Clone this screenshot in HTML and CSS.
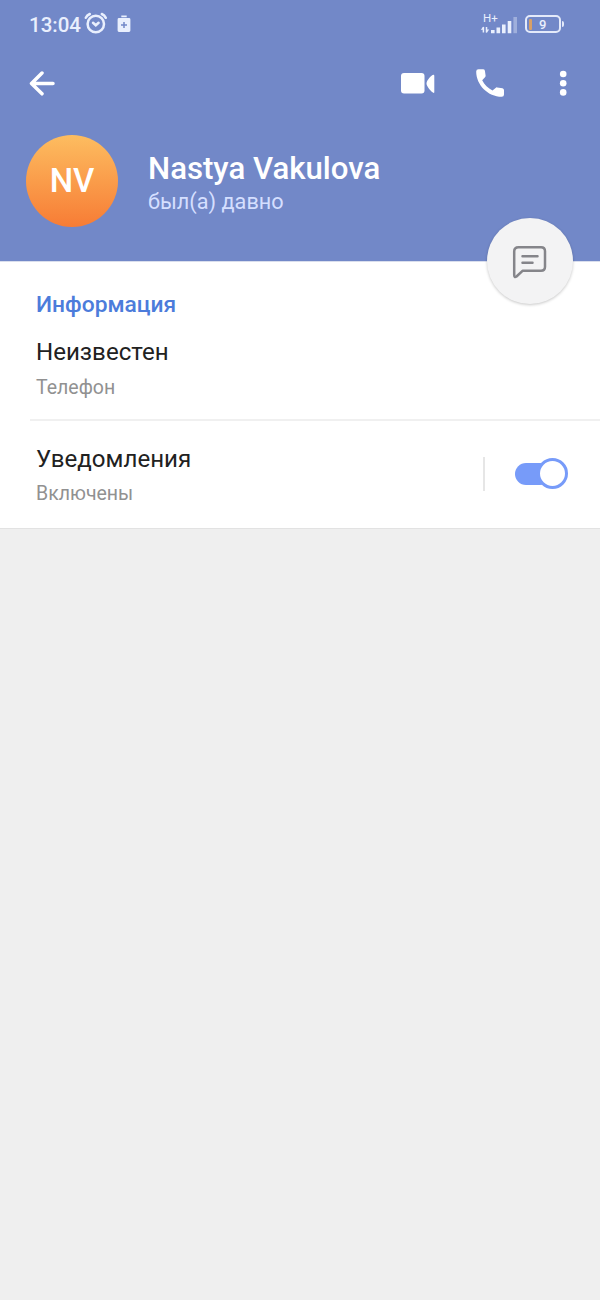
FILE: index.html
```html
<!DOCTYPE html>
<html lang="ru">
<head>
<meta charset="utf-8">
<title>Nastya Vakulova</title>
<link rel="stylesheet" href="styles.css">
</head>
<body>
<header class="header">
  <div class="status-bar">
    <span class="clock">13:04</span>
    <svg class="alarm" width="24" height="24" viewBox="0 0 24 24" fill="none" stroke="currentColor" stroke-width="2.500" stroke-linecap="round"><circle cx="11.800" cy="13" r="8.200"/><path d="M9 11.800l2.800 2.500 2.800-2.500M1.800 6.800Q3 4.300 5.800 3M21.800 6.800Q20.500 4.300 17.800 3"/></svg>
    <svg class="saver" width="14" height="18" viewBox="0 0 14 18"><path fill="currentColor" d="M4.300 .5h5.400v1.700H4.300zM2 3h10q1.400 0 1.400 1.400v11.200q0 1.400-1.400 1.400H2q-1.400 0-1.400-1.400V4.400Q.600 3 2 3z"/><path d="M7 7v6M4 10h6" stroke="#7288c8" stroke-width="1.500"/></svg>
    <div class="signal">
      <span class="network">H+</span>
      <svg class="bars" width="38" height="18" viewBox="0 0 38 18"><path fill="none" stroke="currentColor" stroke-width="1.500" d="M3.400 15.500V10M6.500 10v5.500"/><path fill="currentColor" d="M.800 12.800L3.400 9.500v3.300zM6.500 12.500H9.200L6.500 16z"/><path fill="currentColor" d="M11 13h3.600v3.200H11zM16.500 10.500h3.600v5.700h-3.600zM22 7.500h3.600v8.700H22zM27.700 4h3.600V16.200h-3.600z"/><path fill="currentColor" opacity=".38" d="M33.400 0H37v16.200h-3.600z"/></svg>
    </div>
    <div class="battery"><span class="charge"></span><span class="level">9</span></div>
    <span class="battery-tip"></span>
  </div>

  <nav class="toolbar">
    <svg class="back" width="28" height="26" viewBox="0 0 28 26" fill="none" stroke="currentColor" stroke-width="3.500" stroke-linecap="round" stroke-linejoin="round"><path d="M14 3L3.500 13.400 14 23.800M4 13.400H25"/></svg>
    <svg class="video" width="34" height="22" viewBox="0 0 34 22" fill="currentColor"><rect x="0" y="1" width="23.500" height="20.500" rx="3"/><path d="M25.500 11.500C25.500 8.500 30.500 3 32.400 2.800Q33.300 2.700 33.300 4V20Q33.300 21.200 32.400 20.800C30.500 20 25.500 14.500 25.500 11.500z"/></svg>
    <svg class="phone" width="30" height="30" viewBox="0 0 30 30" fill="currentColor"><path d="M3.500 1.300H8Q9.600 1.300 9.900 2.700L10.600 7.600Q10.700 8.500 10 9.300L7.200 12.300C9.500 16.900 13 20.300 17.500 22.600L20.600 19.900Q21.300 19.200 22.200 19.400L27.500 20.300Q29 20.600 29 22.200V26.500Q29 28.800 26.700 28.800C13 28.800 1.200 17 1.200 3.500Q1.200 1.300 3.500 1.300z"/></svg>
    <svg class="more" width="8" height="26" viewBox="0 0 8 26" fill="currentColor"><circle cx="4.200" cy="4" r="3.300"/><circle cx="4.200" cy="13.200" r="3.300"/><circle cx="4.200" cy="22.400" r="3.300"/></svg>
  </nav>

  <div class="profile">
    <div class="avatar">NV</div>
    <div class="identity">
      <h1 class="name">Nastya Vakulova</h1>
      <p class="presence">был(а) давно</p>
    </div>
  </div>
  <button class="message" aria-label="Сообщение">
    <svg width="36" height="36" viewBox="0 0 36 36" fill="none" stroke="currentColor" stroke-width="2.500" stroke-linecap="round" stroke-linejoin="round"><path d="M6.500 4.200H29Q33 4.200 33 8.200V23.800Q33 27.800 29 27.800H10.500L4.500 33.500Q2.200 35 2.200 32V8.500Q2.200 4.200 6.500 4.200zM10.500 13.300H25.500M10.500 19.800H20.500"/></svg>
  </button>
</header>

<main class="content">
  <section class="info">
    <h2 class="section-title">Информация</h2>
    <p class="value">Неизвестен</p>
    <p class="caption">Телефон</p>
  </section>
  <section class="notifications">
    <div class="setting">
      <p class="value">Уведомления</p>
      <p class="caption">Включены</p>
    </div>
    <span class="separator"></span>
    <div class="switch"><span class="track"></span><span class="knob"></span></div>
  </section>
</main>
</body>
</html>
```
FILE: styles.css
```css
* { box-sizing: border-box; }
body {
  margin: 0;
  min-height: 1300px;
  background: #efefef;
  font-family: Roboto, "Liberation Sans", sans-serif;
}
h1, h2, p { margin: 0; white-space: nowrap; }
svg { display: block; flex: none; }

.header {
  position: relative;
  height: 261px;
  background: #7288c8;
  color: #fff;
}
.status-bar {
  display: flex;
  align-items: center;
  height: 48px;
  padding: 0 36px 0 29px;
  color: #e9effd;
}
.clock { width: 55px; font-size: 20.500px; font-weight: 500; line-height: 28px; padding-top: 1px; }
.alarm { margin-top: -2px; }
.saver { margin-left: 9px; }
.signal { width: 38px; margin: 0 7px 0 auto; height: 22px; }
.network { display: block; height: 4px; padding-left: 3px; font-size: 11.500px; line-height: 11px; }
.battery {
  display: flex;
  align-items: center;
  width: 36px;
  height: 18px;
  padding-left: 2px;
  border: 2px solid #e4eafa;
  border-radius: 5px;
}
.charge { width: 3px; height: 11px; border-radius: 1px; background: #d7a067; }
.level { margin-left: 7px; font-size: 13px; font-weight: 500; line-height: 14px; padding-top: 1px; }
.battery-tip { width: 2px; height: 6px; margin-left: 1px; border-radius: 0 2px 2px 0; background: #e4eafa; }

.toolbar { display: flex; align-items: center; height: 70px; padding: 0 33px 0 28px; }
.video { margin-left: auto; }
.phone { margin-left: 40px; }
.more { margin-left: 54px; }

.profile { display: flex; padding: 17px 0 0 26px; }
.avatar {
  width: 92px;
  height: 92px;
  border-radius: 50%;
  background: linear-gradient(#fdbd60, #f77c35);
  text-align: center;
  font-size: 33px;
  font-weight: 500;
  line-height: 92px;
}
.identity { padding: 16px 0 0 30px; }
.name { font-size: 31.200px; font-weight: 500; line-height: 36px; }
.presence { margin-top: 1px; color: #d5dfff; font-size: 21.700px; line-height: 28px; }
.message {
  position: absolute;
  left: 487px;
  top: 218px;
  display: grid;
  place-items: center;
  width: 86px;
  height: 86px;
  padding: 0;
  border: 0;
  border-radius: 50%;
  background: #f3f3f4;
  box-shadow: 0 1px 3px rgba(0, 0, 0, .22);
  color: #85858a;
}

.content { height: 268px; background: #fff; border-bottom: 1px solid #e2e2e2; border-top: 1px solid #d9deed; }
.info { height: 157px; padding: 28px 0 0 36px; }
.section-title { color: #4c7cdb; font-size: 22.800px; font-weight: 500; line-height: 29px; }
.value { color: #212121; font-size: 24.100px; line-height: 30px; }
.caption { color: #919191; font-size: 19.500px; line-height: 26px; margin-top: 7px; }
.info .value { margin-top: 18px; }
.info .caption { margin-top: 8px; }
.notifications {
  display: flex;
  height: 109px;
  margin-left: 30px;
  padding: 23px 32px 0 6px;
  border-top: 2px solid #f0f0f0;
}
.separator { width: 2px; height: 34px; margin: 13px 30px 0 auto; background: #e6e6e6; }
.switch { display: flex; align-items: center; width: 53px; height: 31px; margin-top: 14px; }
.track { width: 36px; height: 22px; border-radius: 11px; background: #779bf9; }
.knob { flex: none; width: 31px; height: 31px; margin-left: -14px; border: 3px solid #779bf9; border-radius: 50%; background: #fff; }
```
